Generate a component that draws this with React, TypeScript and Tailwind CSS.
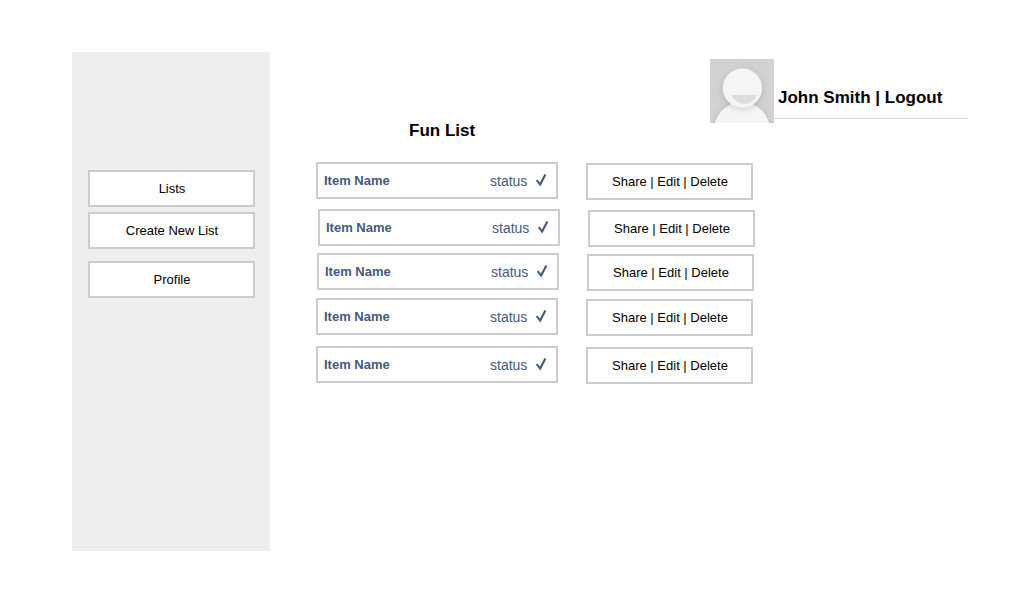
const items = [
  { id: 1, place: "" },
  { id: 2, place: "mt-[9px] ml-0.5" },
  { id: 3, place: "mt-1.5 ml-px" },
  { id: 4, place: "mt-[7px]" },
  { id: 5, place: "mt-2.5" },
];

function Box({ label, className = "" }: { label: string; className?: string }) {
  return (
    <button
      className={`flex h-[37px] w-[167px] shrink-0 items-center justify-center border-2 border-[#cccccc] bg-white pl-px text-[13px] leading-4 text-black ${className}`}
    >
      {label}
    </button>
  );
}

function Avatar() {
  return (
    <svg width="64" height="64" viewBox="0 0 64 64" className="shrink-0">
      <defs>
        <filter id="soft" x="-30%" y="-30%" width="160%" height="160%">
          <feDropShadow dx="0" dy="1.5" stdDeviation="3" floodColor="#000000" floodOpacity="0.17" />
        </filter>
      </defs>
      <rect width="64" height="64" fill="#d2d2d2" />
      <ellipse cx="32" cy="73" rx="28.5" ry="30" fill="#f5f5f5" filter="url(#soft)" />
      <circle cx="32.4" cy="29" r="19.6" fill="#f5f5f5" filter="url(#soft)" />
      <path d="M21.3 36H47C44.5 41.5 40 45 34.5 45S24 41.5 21.3 36Z" fill="#dddddd" />
    </svg>
  );
}

function Check() {
  return (
    <svg width="12" height="14" viewBox="0 0 12 14" className="mb-0.5 ml-2 shrink-0">
      <path d="M1.7 7.2L5.1 11.6L10.4 1.4" fill="none" stroke="#435a82" strokeWidth="2.1" />
    </svg>
  );
}

export default function App() {
  return (
    <div className="flex h-[593px] w-[1032px] bg-white pt-[52px] pl-[72px] font-['Liberation_Sans',Arial,sans-serif]">
      <aside className="flex h-[499px] w-[198px] shrink-0 flex-col bg-[#eeeeee] pt-[118px] pl-4">
        <Box label="Lists" />
        <Box label="Create New List" className="mt-[5px]" />
        <Box label="Profile" className="mt-3" />
      </aside>
      <main className="flex flex-1 flex-col pl-[46px]">
        <header className="flex h-[110px] items-start pt-[7px]">
          <h1 className="mt-[62px] ml-[93px] w-[301px] text-[17px] leading-5 font-bold text-black">Fun List</h1>
          <Avatar />
          <div className="-ml-1.5 h-[60px] w-[200px] border-b border-[#d9d9d9] pt-[29px] pl-2.5 text-[17px] leading-5 font-bold whitespace-nowrap text-black">
            John Smith | Logout
          </div>
        </header>
        {items.map((item) => (
          <div key={item.id} className={`flex items-start ${item.place}`}>
            <div className="flex h-[37px] w-[242px] items-center rounded-[1px] border-2 border-[#cccccc] bg-white pl-1.5 text-[#435a82]">
              <span className="w-[166px] text-[13px] leading-4 font-bold">Item Name</span>
              <span className="mt-px text-sm leading-4">status</span>
              <Check />
            </div>
            <Box label="Share | Edit | Delete" className="mt-px ml-7" />
          </div>
        ))}
      </main>
    </div>
  );
}
